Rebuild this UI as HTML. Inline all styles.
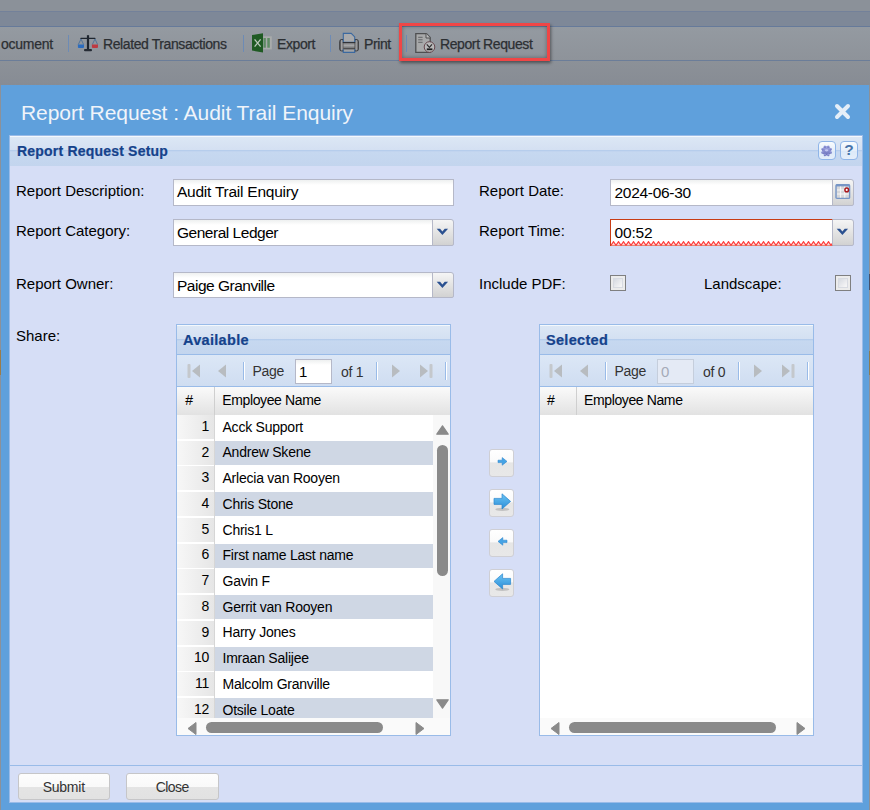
<!DOCTYPE html>
<html><head><meta charset="utf-8">
<style>
*{box-sizing:border-box;margin:0;padding:0}
html,body{width:870px;height:810px;overflow:hidden;font-family:"Liberation Sans",sans-serif;background:#8c9199}
.a{position:absolute}
#bg0{left:0;top:0;width:870px;height:11px;background:#8b9199}
#bg1{left:0;top:11px;width:870px;height:15px;background:#7e8898;border-top:1px solid #73819a}
#bgl1{left:0;top:26px;width:870px;height:1px;background:#667a9a}
#tb{left:0;top:27px;width:870px;height:33px;background:linear-gradient(#949aa1,#8e939a)}
#bgl2{left:0;top:60px;width:870px;height:1px;background:#6b7d99}
#bg2{left:0;top:61px;width:870px;height:24px;background:linear-gradient(#8c9198,#878c94)}
.tt{font-size:14px;letter-spacing:-.4px;color:#2c2f33;-webkit-text-stroke:.25px #2c2f33;top:35.5px;line-height:16px;white-space:nowrap}
.sep{width:1px;height:17px;top:35px;background:#6d8bb5}
#hl{left:398.5px;top:22.7px;width:151.5px;height:38.2px;border:3.6px solid #f04646;box-shadow:1px 2px 3px rgba(0,0,0,.45), inset 0 0 4px rgba(0,0,0,.35)}

#dlg{left:1px;top:85px;width:868px;height:725px;background:#5fa0dc}
#dtitle{left:21px;top:100px;font-size:21px;color:#f0f4fa;letter-spacing:-.05px;line-height:26px;white-space:nowrap}
#panel{left:9px;top:135px;width:854px;height:668px;background:#d6def6;border:1px solid #99bbe8}
.hdrg{background:linear-gradient(#f4f8fc 0,#f4f8fc 1px,#dce7f5 1px,#d4e0f2 14px,#b6cdec 14.5px,#c6d8f0 16px,#c3d5ee 100%)}
#phdr{left:10px;top:136px;width:852px;height:30px}
#ptitle{left:17px;top:143px;font-size:14px;font-weight:bold;color:#15428b;-webkit-text-stroke:.2px #15428b;line-height:16px;white-space:nowrap;letter-spacing:.2px}
.tool{width:18px;height:19px;top:141px;border:1px solid #8fb5e8;border-radius:4px;background:linear-gradient(#f8fbfe,#e6effa 50%,#dce9f8 51%,#e4eefa)}

.lbl{font-size:15px;color:#000;line-height:18px;white-space:nowrap}
.fld{height:26.5px;background:linear-gradient(#eef0f0 0,#fff 5px,#fff 100%);border:1px solid #b5b8c8}
.ftx{font-size:15.5px;color:#000;line-height:18px;white-space:nowrap}
.trg{width:22px;height:26.5px;border:1px solid #b5b8c8;border-radius:0 3px 2px 0;background:linear-gradient(#f5f5f5,#e9e9e9 35%,#d2d2d2)}
.cb{width:16px;height:16px;border:1px solid #7f7f80;background:linear-gradient(135deg,#c9ced8,#f4f4f5 70%);box-shadow:inset 0 0 0 2px #ececec, inset 0 0 0 3px #d8dbe2}

.grid{width:275px;height:412px;border:1px solid #99bbe8;background:#fff;overflow:hidden}
.g{position:absolute}
.gh{left:0;top:0;right:0;height:30px;border-bottom:1px solid #99bbe8}
.gtitle{left:6px;top:6.5px;font-size:14.5px;letter-spacing:.3px;font-weight:bold;color:#15428b;-webkit-text-stroke:.2px #15428b;line-height:16px;white-space:nowrap}
.gtb{left:0;top:30px;right:0;height:32px;background:linear-gradient(#dce7f6,#cfddf1);border-bottom:1px solid #99bbe8}
.gch{left:0;top:62px;right:0;height:28px;background:linear-gradient(#fafafa,#e2e2e2)}
.gct{top:67px;font-size:14px;letter-spacing:-.38px;line-height:16px;white-space:nowrap;color:#000}
.csep{left:37px;top:62px;width:1px;height:28px;background:#cfcfcf}
.rn{left:0;width:37px;background:linear-gradient(90deg,#f7f7f7,#e6e6e6)}
.rc{left:38px;width:219px}
.rt{font-size:14px;letter-spacing:-.23px;line-height:16px;white-space:nowrap;color:#000}
.stripe{background:#cfd7e4}
.ptx{font-size:14px;letter-spacing:-.3px;color:#333;line-height:16px;white-space:nowrap}
.pin{width:37px;height:25px;border:1px solid #b5b8c8;background:linear-gradient(#eef0f0 0,#fff 5px,#fff 100%)}
.tsep{width:2px;height:18px;background:linear-gradient(90deg,#99bbe8 50%,#fff 50%)}
.bt{width:24.5px;height:28.3px;border:1px solid #cfcfd4;border-radius:3px;background:linear-gradient(#fff 0,#fafafa 45%,#e6e6e6 50%,#e8e8e8 100%)}
.fb{width:92.5px;height:27px;border:1px solid #c6c6c8;border-radius:3px;background:linear-gradient(#fdfdfd 0,#f9f9f9 52%,#e4e4e4 54%,#e2e2e2 100%);font-size:14px;color:#333;text-align:center;line-height:26px}
</style></head><body>
<div class="a" id="bg0"></div>
<div class="a" id="bg1"></div>
<div class="a" id="bgl1"></div>
<div class="a" id="tb"></div>
<div class="a" id="bgl2"></div>
<div class="a" id="bg2"></div>

<div class="a tt" style="left:1px;letter-spacing:-.25px">ocument</div>
<div class="a sep" style="left:68px"></div>
<div class="a tt" style="left:103px">Related Transactions</div>
<div class="a sep" style="left:243px"></div>
<div class="a tt" style="left:277px">Export</div>
<div class="a sep" style="left:330px"></div>
<div class="a tt" style="left:364px">Print</div>
<div class="a sep" style="left:406px"></div>
<div class="a tt" style="left:440px">Report Request</div>

<svg class="a" style="left:74px;top:30px" width="28" height="26" viewBox="0 0 28 26">
 <rect x="12.9" y="5.2" width="2.2" height="14.5" fill="#1f2630"/>
 <rect x="6.3" y="7.7" width="15.2" height="1.4" rx=".6" fill="#1f2630"/>
 <rect x="10" y="19" width="8" height="2.3" rx="1" fill="#262c35"/>
 <path d="M7 9 L4.3 14.5 M7 9 L9.6 14.5 M21 9 L18.3 14.5 M21 9 L23.6 14.5" stroke="#4a6f98" stroke-width=".9" fill="none"/>
 <path d="M3.9 14.5 H10 V17 Q10 18 9 18 H4.9 Q3.9 18 3.9 17 Z" fill="#2b6cbf"/>
 <path d="M17.9 14.5 H24 V17 Q24 18 23 18 H18.9 Q17.9 18 17.9 17 Z" fill="#bd3a42"/>
</svg>
<svg class="a" style="left:248px;top:30px" width="28" height="26" viewBox="0 0 28 26">
 <rect x="15.2" y="6.3" width="8.6" height="13.1" fill="#a9abab"/>
 <rect x="15.5" y="8" width="2.3" height="9.7" fill="#5d8a62"/>
 <rect x="19.3" y="8" width="2.5" height="9.7" fill="#5f8c64"/>
 <path d="M4 5.1 L15 3.2 L15 22.5 L4 20.6 Z" fill="#1f5a23"/>
 <path d="M6.6 9.4 L12.6 16.7 M12.6 9.4 L6.6 16.7" stroke="#bccabd" stroke-width="1.3"/>
</svg>
<svg class="a" style="left:335px;top:28px" width="28" height="28" viewBox="0 0 28 28">
 <defs><linearGradient id="pside" x1="0" x2="1"><stop offset="0" stop-color="#3e3e40"/><stop offset=".45" stop-color="#a9a9ab"/><stop offset="1" stop-color="#5c5c5e"/></linearGradient>
 <linearGradient id="pmid" x1="0" y1="0" x2="0" y2="1"><stop offset="0" stop-color="#7d7e80"/><stop offset=".5" stop-color="#a4a5a7"/><stop offset="1" stop-color="#6c6d6f"/></linearGradient></defs>
 <rect x="4.2" y="11" width="19.7" height="12.5" rx="3.2" fill="#39393b"/>
 <rect x="5" y="12" width="3.6" height="10.5" rx="1.6" fill="url(#pside)"/>
 <rect x="19.5" y="12" width="3.6" height="10.5" rx="1.6" fill="url(#pside)"/>
 <rect x="8.4" y="14.6" width="11.2" height="5.8" fill="url(#pmid)"/>
 <path d="M8.3 5.4 H16.2 L19.7 8.9 V14.2 H8.3 Z" fill="#a9aaac" stroke="#3b69a0" stroke-width="1.1"/>
 <rect x="7.8" y="14.1" width="12.4" height="1" fill="#2e2e30"/>
 <path d="M8.3 21.3 V24.4 H19.7 V21.3" fill="#a2a3a5" stroke="#3b69a0" stroke-width="1.1"/>
</svg>
<svg class="a" style="left:411px;top:28px" width="28" height="28" viewBox="0 0 28 28">
 <path d="M4.8 5.6 H15.4 L19.2 9.6 V24.3 H4.8 Z" fill="#a8a9aa" stroke="#4e4f51" stroke-width="1.3"/>
 <path d="M15 5.6 V10 H19.2" fill="#bbbcbd" stroke="#4e4f51" stroke-width="1"/>
 <path d="M7.2 9.3 H11.6 M7.2 11.8 H11.6 M7.2 14.3 H11.6" stroke="#5a5b5d" stroke-width=".9"/>
 <circle cx="18.5" cy="19" r="5.3" fill="#b9b9ba" stroke="#67484f" stroke-width="1"/>
 <path d="M15.8 16.3 L18.4 19.4 L21 16.3" stroke="#2f2f30" stroke-width="1.2" fill="none"/>
 <rect x="15.8" y="20.4" width="5.6" height="1.8" fill="#1e1e1f"/>
</svg>
<div class="a" id="hl"></div>

<div class="a" id="dlg"></div><div class="a" style="left:0;top:350px;width:1px;height:25px;background:#9c7c48"></div><div class="a" style="left:869px;top:274px;width:1px;height:16px;background:#45506a"></div><div class="a" style="left:869px;top:351px;width:1px;height:24px;background:#8c7c52"></div>
<div class="a" id="dtitle">Report Request : Audit Trail Enquiry</div>
<svg class="a" style="left:833px;top:102px" width="19" height="19" viewBox="0 0 19 19"><path d="M4 4 L15 15 M15 4 L4 15" stroke="#e4eef8" stroke-width="4" stroke-linecap="round"/></svg>
<div class="a" id="panel"></div>
<div class="a hdrg" id="phdr"></div>
<div class="a" id="ptitle">Report Request Setup</div>
<div class="a tool" style="left:818px"></div>
<div class="a tool" style="left:839.5px"></div>

<div class="a lbl" style="left:16px;top:182px">Report Description:</div>
<div class="a lbl" style="left:16px;top:222px">Report Category:</div>
<div class="a lbl" style="left:16px;top:275px">Report Owner:</div>
<div class="a lbl" style="left:16px;top:327px">Share:</div>
<div class="a lbl" style="left:479px;top:182px">Report Date:</div>
<div class="a lbl" style="left:479px;top:222px">Report Time:</div>
<div class="a lbl" style="left:479px;top:275px">Include PDF:</div>
<div class="a lbl" style="left:704px;top:275px">Landscape:</div>

<div class="a fld" style="left:173px;top:179.3px;width:281px"></div>
<div class="a ftx" style="left:177px;top:183px;letter-spacing:-.24px">Audit Trail Enquiry</div>
<div class="a fld" style="left:173px;top:219px;width:260px"></div>
<div class="a trg" style="left:432px;top:219px"></div>
<div class="a ftx" style="left:177px;top:223.5px;letter-spacing:-.48px">General Ledger</div>
<div class="a fld" style="left:173px;top:271.8px;width:260px"></div>
<div class="a trg" style="left:432px;top:271.8px"></div>
<div class="a ftx" style="left:177px;top:276.5px;letter-spacing:-.5px">Paige Granville</div>

<div class="a fld" style="left:610px;top:179.2px;width:223px"></div>
<div class="a trg" style="left:832px;top:179.2px"></div>
<div class="a ftx" style="left:614.5px;top:183.5px;letter-spacing:-.3px">2024-06-30</div>
<div class="a fld" style="left:610px;top:219px;width:223px;border-color:#c83c14;background:#fff"></div>
<div class="a trg" style="left:832px;top:219px"></div>
<div class="a ftx" style="left:614.5px;top:224px;letter-spacing:-.17px">00:52</div>
<svg class="a" style="left:611px;top:240.5px" width="221" height="5" viewBox="0 0 221 5"><defs><pattern id="wv" width="5" height="5" patternUnits="userSpaceOnUse"><path d="M-0.2 4.6 L2.5 0.6 L5.2 4.6" stroke="#ff3c3c" stroke-width="1.1" fill="#ffd6d6"/></pattern></defs><rect width="221" height="5" fill="url(#wv)"/></svg>
<div class="a cb" style="left:610px;top:275px"></div>
<div class="a cb" style="left:835px;top:275px"></div>

<div class="a grid" style="left:176px;top:324px"><div class="g gh hdrg"></div><div class="g gtitle">Available</div><div class="g gtb"></div><div class="g" style="left:0px;top:0;width:275px;height:90px"><svg class="g" style="left:10px;top:38px" width="14" height="16" viewBox="0 0 14 16"><rect x="0.5" y="1" width="3" height="14" rx="1" fill="#c4c8cc"/><path d="M13 1.5 L5 8 L13 14.5 Z" fill="#b8bcc0"/></svg><svg class="g" style="left:40px;top:38px" width="10" height="16" viewBox="0 0 10 16"><path d="M9 1.5 L1 8 L9 14.5 Z" fill="#b8bcc0"/></svg><div class="g tsep" style="left:66px;top:37px"></div><div class="g ptx" style="left:75.5px;top:38px">Page</div><div class="g pin" style="left:117.5px;top:33.5px"></div><div class="g ptx" style="left:122px;top:38.5px;font-size:15px;color:#000">1</div><div class="g ptx" style="left:164px;top:39px">of 1</div><div class="g tsep" style="left:199px;top:37px"></div><svg class="g" style="left:214px;top:38px" width="10" height="16" viewBox="0 0 10 16"><path d="M1 1.5 L9 8 L1 14.5 Z" fill="#b8bcc0"/></svg><svg class="g" style="left:242px;top:38px" width="14" height="16" viewBox="0 0 14 16"><path d="M1 1.5 L9 8 L1 14.5 Z" fill="#b8bcc0"/><rect x="10.5" y="1" width="3" height="14" rx="1" fill="#c4c8cc"/></svg><div class="g tsep" style="left:268px;top:37px"></div></div><div class="g gch"></div><div class="g csep" style="left:37px"></div><div class="g gct" style="left:8.3px">#</div><div class="g gct" style="left:45.3px">Employee Name</div><div class="g rn" style="top:90.00px;height:24.03px"></div><div class="g rc" style="top:90.00px;height:24.03px"></div><div class="g rt" style="right:241px;top:92.80px;text-align:right">1</div><div class="g rt" style="left:45.5px;top:93.60px">Acck Support</div><div class="g rn" style="top:115.73px;height:24.03px"></div><div class="g rc stripe" style="top:115.73px;height:24.03px"></div><div class="g rt" style="right:241px;top:118.53px;text-align:right">2</div><div class="g rt" style="left:45.5px;top:119.33px">Andrew Skene</div><div class="g rn" style="top:141.46px;height:24.03px"></div><div class="g rc" style="top:141.46px;height:24.03px"></div><div class="g rt" style="right:241px;top:144.26px;text-align:right">3</div><div class="g rt" style="left:45.5px;top:145.06px">Arlecia van Rooyen</div><div class="g rn" style="top:167.19px;height:24.03px"></div><div class="g rc stripe" style="top:167.19px;height:24.03px"></div><div class="g rt" style="right:241px;top:169.99px;text-align:right">4</div><div class="g rt" style="left:45.5px;top:170.79px">Chris Stone</div><div class="g rn" style="top:192.92px;height:24.03px"></div><div class="g rc" style="top:192.92px;height:24.03px"></div><div class="g rt" style="right:241px;top:195.72px;text-align:right">5</div><div class="g rt" style="left:45.5px;top:196.52px">Chris1 L</div><div class="g rn" style="top:218.65px;height:24.03px"></div><div class="g rc stripe" style="top:218.65px;height:24.03px"></div><div class="g rt" style="right:241px;top:221.45px;text-align:right">6</div><div class="g rt" style="left:45.5px;top:222.25px">First name Last name</div><div class="g rn" style="top:244.38px;height:24.03px"></div><div class="g rc" style="top:244.38px;height:24.03px"></div><div class="g rt" style="right:241px;top:247.18px;text-align:right">7</div><div class="g rt" style="left:45.5px;top:247.98px">Gavin F</div><div class="g rn" style="top:270.11px;height:24.03px"></div><div class="g rc stripe" style="top:270.11px;height:24.03px"></div><div class="g rt" style="right:241px;top:272.91px;text-align:right">8</div><div class="g rt" style="left:45.5px;top:273.71px">Gerrit van Rooyen</div><div class="g rn" style="top:295.84px;height:24.03px"></div><div class="g rc" style="top:295.84px;height:24.03px"></div><div class="g rt" style="right:241px;top:298.64px;text-align:right">9</div><div class="g rt" style="left:45.5px;top:299.44px">Harry Jones</div><div class="g rn" style="top:321.57px;height:24.03px"></div><div class="g rc stripe" style="top:321.57px;height:24.03px"></div><div class="g rt" style="right:241px;top:324.37px;text-align:right">10</div><div class="g rt" style="left:45.5px;top:325.17px">Imraan Salijee</div><div class="g rn" style="top:347.30px;height:24.03px"></div><div class="g rc" style="top:347.30px;height:24.03px"></div><div class="g rt" style="right:241px;top:350.10px;text-align:right">11</div><div class="g rt" style="left:45.5px;top:350.90px">Malcolm Granville</div><div class="g rn" style="top:373.03px;height:24.03px"></div><div class="g rc stripe" style="top:373.03px;height:24.03px"></div><div class="g rt" style="right:241px;top:375.83px;text-align:right">12</div><div class="g rt" style="left:45.5px;top:376.63px">Otsile Loate</div><div class="g" style="left:37px;top:90px;width:1px;height:303px;background:#d6d6d6"></div><div class="g" style="left:0;top:393px;width:273px;height:17px;background:#fafafa"></div><svg class="g" style="left:10px;top:397px" width="10" height="13" viewBox="0 0 10 13"><path d="M9 0.5 L1 6.5 L9 12.5 Z" fill="#8a8a8a" stroke="#8a8a8a" stroke-linejoin="round" stroke-width="1"/></svg><div class="g" style="left:29px;top:397px;width:177px;height:11px;border-radius:6px;background:#8a8a8a"></div><svg class="g" style="left:238px;top:397px" width="10" height="13" viewBox="0 0 10 13"><path d="M1 0.5 L9 6.5 L1 12.5 Z" fill="#8a8a8a" stroke="#8a8a8a" stroke-linejoin="round" stroke-width="1"/></svg><div class="g" style="left:256px;top:90px;width:17px;height:303px;background:#f8f8f8"></div><svg class="g" style="left:259px;top:100px" width="13" height="10" viewBox="0 0 13 10"><path d="M0.8 9.2 L6.5 0.8 L12.2 9.2 Z" fill="#8a8a8a" stroke="#8a8a8a" stroke-linejoin="round" stroke-width="1.2"/></svg><div class="g" style="left:260px;top:120px;width:11px;height:131px;border-radius:6px;background:#8a8a8a"></div><svg class="g" style="left:259px;top:374px" width="13" height="10" viewBox="0 0 13 10"><path d="M0.8 0.8 L6.5 9.2 L12.2 0.8 Z" fill="#8a8a8a" stroke="#8a8a8a" stroke-linejoin="round" stroke-width="1.2"/></svg></div>
<div class="a grid" style="left:539px;top:324px"><div class="g gh hdrg"></div><div class="g gtitle">Selected</div><div class="g gtb"></div><div class="g" style="left:-1px;top:0;width:275px;height:90px"><svg class="g" style="left:10px;top:38px" width="14" height="16" viewBox="0 0 14 16"><rect x="0.5" y="1" width="3" height="14" rx="1" fill="#c4c8cc"/><path d="M13 1.5 L5 8 L13 14.5 Z" fill="#b8bcc0"/></svg><svg class="g" style="left:40px;top:38px" width="10" height="16" viewBox="0 0 10 16"><path d="M9 1.5 L1 8 L9 14.5 Z" fill="#b8bcc0"/></svg><div class="g tsep" style="left:66px;top:37px"></div><div class="g ptx" style="left:75.5px;top:38px">Page</div><div class="g pin" style="left:117.5px;top:33.5px;background:#e4eaf5;border-color:#c5cedc"></div><div class="g ptx" style="left:122px;top:38.5px;font-size:15px;color:#a4abb8">0</div><div class="g ptx" style="left:164px;top:39px">of 0</div><div class="g tsep" style="left:199px;top:37px"></div><svg class="g" style="left:214px;top:38px" width="10" height="16" viewBox="0 0 10 16"><path d="M1 1.5 L9 8 L1 14.5 Z" fill="#b8bcc0"/></svg><svg class="g" style="left:242px;top:38px" width="14" height="16" viewBox="0 0 14 16"><path d="M1 1.5 L9 8 L1 14.5 Z" fill="#b8bcc0"/><rect x="10.5" y="1" width="3" height="14" rx="1" fill="#c4c8cc"/></svg><div class="g tsep" style="left:268px;top:37px"></div></div><div class="g gch"></div><div class="g csep" style="left:36px"></div><div class="g gct" style="left:7.1000000000000005px">#</div><div class="g gct" style="left:44.0px">Employee Name</div><div class="g" style="left:0;top:393px;width:273px;height:17px;background:#fafafa"></div><svg class="g" style="left:10px;top:397px" width="10" height="13" viewBox="0 0 10 13"><path d="M9 0.5 L1 6.5 L9 12.5 Z" fill="#8a8a8a" stroke="#8a8a8a" stroke-linejoin="round" stroke-width="1"/></svg><div class="g" style="left:29px;top:397px;width:207px;height:11px;border-radius:6px;background:#8a8a8a"></div><svg class="g" style="left:256px;top:397px" width="10" height="13" viewBox="0 0 10 13"><path d="M1 0.5 L9 6.5 L1 12.5 Z" fill="#8a8a8a" stroke="#8a8a8a" stroke-linejoin="round" stroke-width="1"/></svg></div>

<div class="a bt" style="left:489px;top:449px"></div>
<div class="a bt" style="left:489px;top:489px"></div>
<div class="a bt" style="left:489px;top:529px"></div>
<div class="a bt" style="left:489px;top:569px"></div>

<svg class="a" style="left:432px;top:219px" width="22" height="26" viewBox="0 0 22 26"><path d="M4.7 9.7 L8.1 9.7 L10.4 12.4 L12.7 9.7 L16.1 9.7 L10.4 16.1 Z" fill="#2b5190"/></svg><svg class="a" style="left:432px;top:271.8px" width="22" height="26" viewBox="0 0 22 26"><path d="M4.7 9.7 L8.1 9.7 L10.4 12.4 L12.7 9.7 L16.1 9.7 L10.4 16.1 Z" fill="#2b5190"/></svg><svg class="a" style="left:832px;top:219px" width="22" height="26" viewBox="0 0 22 26"><path d="M4.7 9.7 L8.1 9.7 L10.4 12.4 L12.7 9.7 L16.1 9.7 L10.4 16.1 Z" fill="#2b5190"/></svg>
<svg class="a" style="left:832px;top:179px" width="22" height="27" viewBox="0 0 22 27">
 <rect x="4" y="5.8" width="13.6" height="13.6" rx="1" fill="#d6d7da" stroke="#7695c6" stroke-width="1.4"/>
 <rect x="4" y="5.4" width="13.6" height="2" fill="#7695c6"/>
 <path d="M8.6 7.5 V18.6 M12.8 7.5 V18.6 M5 11 H16.8 M5 15 H16.8" stroke="#f8f8f9" stroke-width="1"/>
 <circle cx="14.7" cy="10.9" r="1.8" fill="#fff" stroke="#a8161c" stroke-width="1.5"/>
</svg>
<svg class="a" style="left:818px;top:141px" width="18" height="19" viewBox="0 0 18 19">
 <defs><linearGradient id="gr" x1="0" y1="0" x2="0" y2="1"><stop offset="0" stop-color="#a4aae4"/><stop offset="1" stop-color="#6a70ba"/></linearGradient></defs>
 <g fill="url(#gr)"><circle cx="8.6" cy="9.8" r="4.7"/><circle cx="12.76" cy="11.52" r="1.2"/><circle cx="10.32" cy="13.96" r="1.2"/><circle cx="6.88" cy="13.96" r="1.2"/><circle cx="4.44" cy="11.52" r="1.2"/><circle cx="4.44" cy="8.08" r="1.2"/><circle cx="6.88" cy="5.64" r="1.2"/><circle cx="10.32" cy="5.64" r="1.2"/><circle cx="12.76" cy="8.08" r="1.2"/></g>
 <ellipse cx="8.6" cy="9.3" rx="1.8" ry="1.1" fill="#c2c6f2"/>
</svg>
<div class="a" style="left:840px;top:140px;width:18px;height:20px;font:bold 15.5px 'Liberation Sans',sans-serif;color:#4a74aa;text-align:center;line-height:20px">?</div>
<svg class="a" style="left:496.5px;top:456.5px" width="11" height="9" viewBox="0 0 11 9"><path d="M1 3.2 H5.2 V0.6 L10 4.4 L5.2 8.2 V5.6 H1 Z" fill="#44a4e6" stroke="#2f86cc" stroke-width=".6" stroke-linejoin="round"/></svg><svg class="a" style="left:493px;top:493px" width="19" height="19" viewBox="0 0 19 19"><defs><linearGradient id="bg493493" x1="0" y1="0" x2="0" y2="1"><stop offset="0" stop-color="#6cc4f4"/><stop offset="1" stop-color="#2a8ed8"/></linearGradient></defs><ellipse cx="9.3" cy="16.4" rx="7" ry="1.6" fill="#b8b8b8" opacity=".8"/><path d="M1 5.4 H9 V0.8 L17.6 8.4 L9 16 V11.4 H1 Z" fill="url(#bg493493)" stroke="#2b86cf" stroke-width=".7" stroke-linejoin="round"/></svg><svg class="a" style="left:496.5px;top:536.5px" width="11" height="9" viewBox="0 0 11 9"><path d="M10 3.2 H5.8 V0.6 L1 4.4 L5.8 8.2 V5.6 H10 Z" fill="#44a4e6" stroke="#2f86cc" stroke-width=".6" stroke-linejoin="round"/></svg><svg class="a" style="left:493px;top:573px" width="19" height="19" viewBox="0 0 19 19"><defs><linearGradient id="bg493573" x1="0" y1="0" x2="0" y2="1"><stop offset="0" stop-color="#6cc4f4"/><stop offset="1" stop-color="#2a8ed8"/></linearGradient></defs><ellipse cx="9.3" cy="16.4" rx="7" ry="1.6" fill="#b8b8b8" opacity=".8"/><path d="M17.6 5.4 H9.6 V0.8 L1 8.4 L9.6 16 V11.4 H17.6 Z" fill="url(#bg493573)" stroke="#2b86cf" stroke-width=".7" stroke-linejoin="round"/></svg><div class="a" style="left:10px;top:765px;width:852px;height:1px;background:#99bbe8"></div>
<div class="a fb" style="left:17.5px;top:773px;letter-spacing:-.25px">Submit</div>
<div class="a fb" style="left:126px;top:773px;letter-spacing:-.6px">Close</div>
</body></html>
